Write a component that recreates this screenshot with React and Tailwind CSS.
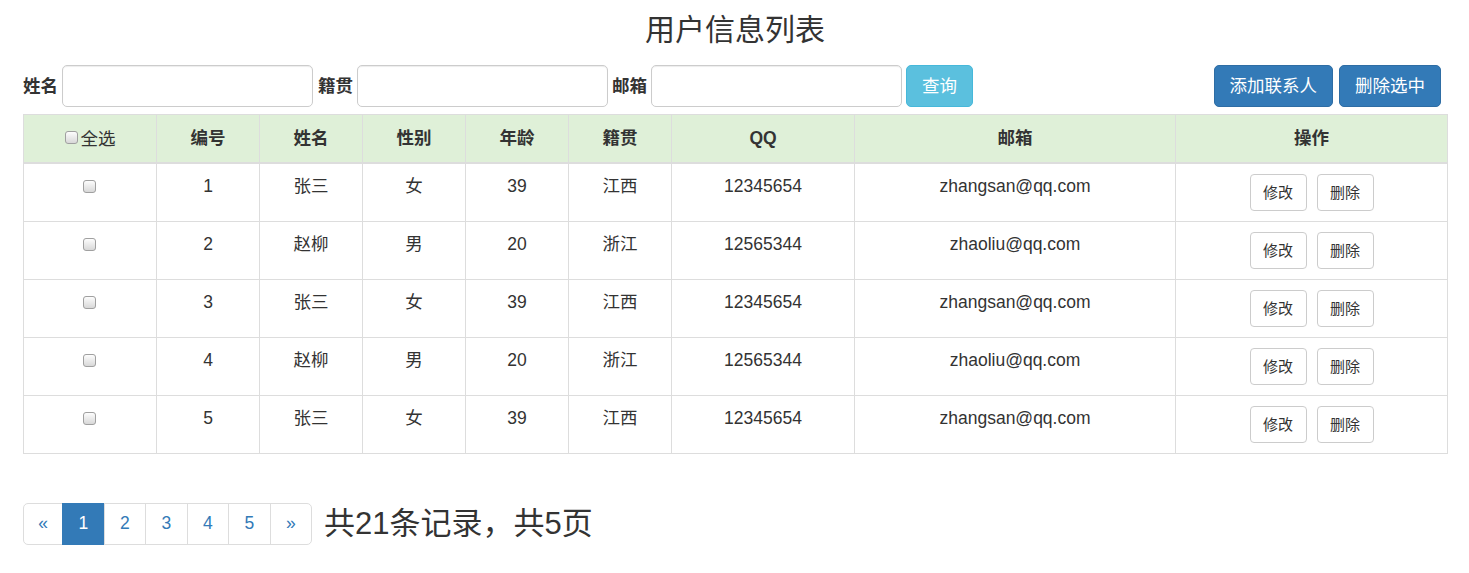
import React from "react";

const rows = [
  { id: 1, name: "张三", sex: "女", age: 39, home: "江西", qq: "12345654", mail: "zhangsan@qq.com" },
  { id: 2, name: "赵柳", sex: "男", age: 20, home: "浙江", qq: "12565344", mail: "zhaoliu@qq.com" },
  { id: 3, name: "张三", sex: "女", age: 39, home: "江西", qq: "12345654", mail: "zhangsan@qq.com" },
  { id: 4, name: "赵柳", sex: "男", age: 20, home: "浙江", qq: "12565344", mail: "zhaoliu@qq.com" },
  { id: 5, name: "张三", sex: "女", age: 39, home: "江西", qq: "12345654", mail: "zhangsan@qq.com" },
];

function Check() {
  return (
    <span className="inline-block w-[13px] h-[13px] rounded-[3px] border border-[#a0a0a0] bg-gradient-to-b from-[#fdfdfd] to-[#d8d8d8] align-middle" />
  );
}

function Input() {
  return (
    <input
      type="text"
      className="w-[251px] h-[42px] border border-[#ccc] rounded-[5px] bg-white shadow-[inset_0_1px_1px_rgba(0,0,0,0.075)] px-[15px] outline-none"
    />
  );
}

const th = "border border-[#ddd] border-b-2 font-bold text-center align-middle px-[10px]";
const td = "border border-[#ddd] text-center align-top pt-[10px] px-[10px] leading-[25px]";

export default function App() {
  return (
    <div
      className="pl-[23px] pr-[22px] text-[#333] text-[17.5px] leading-[25px] bg-white min-h-[573px]"
      style={{ fontFamily: '"Liberation Sans", Arial, "Noto Sans CJK SC", sans-serif' }}
    >
      <h3 className="text-center text-[30px] leading-[34px] pt-[13px] mb-[18px] font-normal">用户信息列表</h3>

      <div className="flex items-center h-[42px]">
        <label className="font-bold mr-[4px]">姓名</label>
        <Input />
        <label className="font-bold ml-[5px] mr-[4px]">籍贯</label>
        <Input />
        <label className="font-bold ml-[4px] mr-[4px]">邮箱</label>
        <Input />
        <button className="ml-[4px] h-[42px] px-[15px] rounded-[5px] bg-[#5bc0de] border border-[#46b8da] text-white">查询</button>
        <div className="ml-auto mr-[6px] flex gap-[6px]">
          <button className="h-[42px] px-[15px] rounded-[5px] bg-[#337ab7] border border-[#2e6da4] text-white">添加联系人</button>
          <button className="h-[42px] px-[15px] rounded-[5px] bg-[#337ab7] border border-[#2e6da4] text-white">删除选中</button>
        </div>
      </div>

      <table className="mt-[7px] w-[1424px] table-fixed border-collapse">
        <colgroup>
          <col className="w-[133px]" />
          <col className="w-[103px]" />
          <col className="w-[103px]" />
          <col className="w-[103px]" />
          <col className="w-[103px]" />
          <col className="w-[103px]" />
          <col className="w-[183px]" />
          <col className="w-[321px]" />
          <col className="w-[272px]" />
        </colgroup>
        <thead>
          <tr className="h-[48px] bg-[#dff0d8]">
            <th className="border border-[#ddd] border-b-2 font-normal text-center align-middle px-[10px]">
              <span className="inline-flex items-center gap-[3px]">
                <span className="-mt-[4px]"><Check /></span>
                <span className="mt-[2px]">全选</span>
              </span>
            </th>
            <th className={th}>编号</th>
            <th className={th}>姓名</th>
            <th className={th}>性别</th>
            <th className={th}>年龄</th>
            <th className={th}>籍贯</th>
            <th className={th}>QQ</th>
            <th className={th}>邮箱</th>
            <th className={th}>操作</th>
          </tr>
        </thead>
        <tbody>
          {rows.map((r) => (
            <tr key={r.id} className="h-[58px]">
              <td className={td}>
                <span className="inline-block mt-[4px] -ml-[2px] align-top leading-none"><Check /></span>
              </td>
              <td className={td}>{r.id}</td>
              <td className={td}>{r.name}</td>
              <td className={td}>{r.sex}</td>
              <td className={td}>{r.age}</td>
              <td className={td}>{r.home}</td>
              <td className={td}>{r.qq}</td>
              <td className={td}>{r.mail}</td>
              <td className="border border-[#ddd] text-center align-middle px-[10px] py-[10px]">
                <div className="flex justify-center gap-[10px]">
                  <button className="h-[37px] w-[57px] text-[15px] border border-[#ccc] rounded-[4px] bg-white text-[#333]">修改</button>
                  <button className="h-[37px] w-[57px] text-[15px] border border-[#ccc] rounded-[4px] bg-white text-[#333]">删除</button>
                </div>
              </td>
            </tr>
          ))}
        </tbody>
      </table>

      <div className="mt-[49px] flex items-center">
        <ul className="flex h-[42px]">
          <li className="w-[40px] flex items-center justify-center border border-[#ddd] rounded-l-[5px] text-[#337ab7]">«</li>
          <li className="w-[42.5px] flex items-center justify-center border border-[#337ab7] bg-[#337ab7] text-white -ml-px">1</li>
          {[2, 3, 4, 5].map((n) => (
            <li key={n} className="w-[42.5px] flex items-center justify-center border border-[#ddd] text-[#337ab7] -ml-px">{n}</li>
          ))}
          <li className="w-[42.5px] flex items-center justify-center border border-[#ddd] rounded-r-[5px] text-[#337ab7] -ml-px">»</li>
        </ul>
        <span className="ml-[12px] text-[31px] leading-[36px]">共21条记录，共5页</span>
      </div>
    </div>
  );
}
